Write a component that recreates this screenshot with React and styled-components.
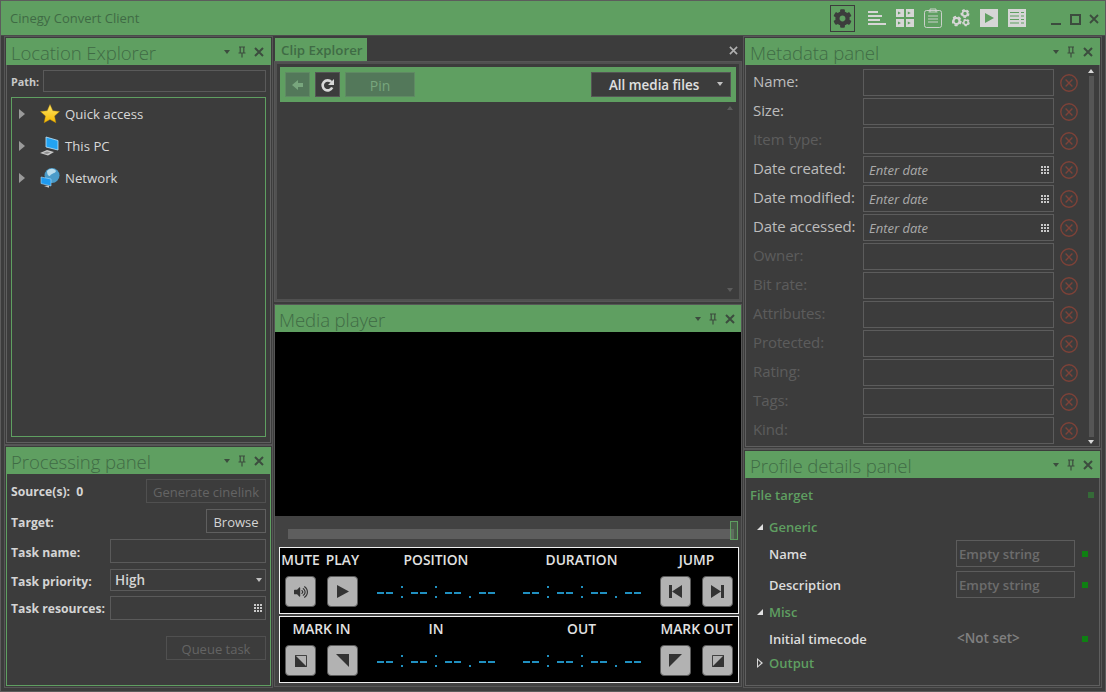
import React from 'react';
import styled, { createGlobalStyle } from 'styled-components';
import { FaCog, FaVolumeUp } from 'react-icons/fa';

const Global = createGlobalStyle`
  html, body { margin: 0; padding: 0; background: #3c3c3c; overflow: hidden; }
  body { font-family: "Open Sans", "Noto Sans", "Liberation Sans", sans-serif; }
  * { box-sizing: border-box; }
`;

const GREEN = '#5f9f61';
const DARKGREEN = '#3f6b45';
const BLUE = '#2090c0';

const Window = styled.div`
  width: 1106px; height: 692px; display: flex; flex-direction: column;
  background: #3c3c3c; border: 1px solid #5c5c5c; overflow: hidden;
`;
const TitleBar = styled.header`
  height: 35px; flex: none; background: ${GREEN}; display: flex; align-items: center;
  padding: 0 7px 0 9px; border-bottom: 1px solid #4b4b4b; margin: 0 -1px 0 0;
`;
const AppTitle = styled.div`
  font-size: 13px; color: ${DARKGREEN}; flex: 1;
`;
const GearBox = styled.div`
  width: 25px; height: 27px; border: 1px solid #3c3c3c; display: flex; align-items: center; justify-content: center;
  color: #3c3c3c; font-size: 19px; margin-right: 13px;
`;
const ToolIcon = styled.div`
  width: 18px; height: 20px; margin-right: ${p => p.$gap ?? 10}px; color: #d6d6d6; display: flex; align-items: center; justify-content: center;
  svg { display: block; }
`;
const WinControls = styled.div`
  display: flex; align-items: center; gap: 8px; margin-left: 25px; color: #3c4c3e; padding-top: 2px;
`;
const Columns = styled.main`
  flex: 1; display: grid; grid-template-columns: 265px 466px 355px; column-gap: 4px;
  padding: 2px 5px 5px 5px; min-height: 0;
`;
const Column = styled.div`
  display: flex; flex-direction: column; gap: 4px; min-height: 0;
`;
const Panel = styled.section`
  display: flex; flex-direction: column; height: ${p => p.$h}px; flex: none;
  outline: 1px solid #565656; outline-offset: 1px;
  border: 1px solid ${p => p.$border ?? '#5f5f5f'}; border-top: 0; background: #3c3c3c;
`;
const PanelHead = styled.div`
  height: 27px; flex: none; background: ${GREEN}; display: flex; align-items: center; margin: 0 -1px;
  padding: 0 7px 0 5px;
`;
const PanelTitle = styled.h2`
  margin: 0; flex: 1; font-size: 18.6px; font-weight: 300; color: ${DARKGREEN}; letter-spacing: -0.1px; white-space: nowrap; padding-top: 1px;
`;
const HeadControls = styled.div`
  display: flex; align-items: center; gap: 8px; color: #3c4c3e; flex: none;
  svg { display: block; }
`;
/* Location */
const PathRow = styled.div`
  display: flex; align-items: center; padding: 5px 4px 0 4px; gap: 4px;
`;
const TinyLabel = styled.label`
  font-size: 10.8px; font-weight: 700; color: #c8c8c8;
`;
const TextBox = styled.div`
  flex: ${p => p.$w ? 'none' : 1}; width: ${p => p.$w ? p.$w + 'px' : 'auto'}; height: ${p => p.$h ?? 24}px; border: 1px solid #5a5a5a;
  display: flex; align-items: center; padding: 0 3px 0 5px;
`;
const Tree = styled.div`
  margin: 5px 4px 5px 4px; flex: 1; border: 1px solid ${GREEN};
`;
const TreeRow = styled.div`
  height: 32px; display: flex; align-items: center; font-size: 13.2px; color: #d8d8d8; padding-left: 7px;
`;
const Caret = styled.span`
  width: 0; height: 0; border-top: 5px solid transparent; border-bottom: 5px solid transparent; border-left: 6px solid #9a9a9a; margin-right: 14px;
`;
const TreeIcon = styled.div`
  width: 22px; height: 22px; margin-right: 4px; flex: none; svg { display: block; }
`;
/* Processing */
const ProcBody = styled.div`
  flex: 1; display: flex; flex-direction: column; padding: 5px 4px 0 4px;
`;
const ProcRow = styled.div`
  display: flex; align-items: center; justify-content: space-between; height: ${p => p.$h ?? 24}px; margin-bottom: ${p => p.$mb ?? 6}px;
`;
const BoldLabel = styled.span`
  font-size: 12.2px; font-weight: 700; color: #d4d4d4; white-space: nowrap; position: relative; top: ${p => p.$t ?? 1}px; word-spacing: ${p => p.$ws ?? 0}px;
`;
const FlatButton = styled.div`
  width: ${p => p.$w}px; height: 24px; border: 1px solid ${p => p.$disabled ? '#505050' : '#5f5f5f'};
  font-size: 13px; color: ${p => p.$disabled ? '#646464' : '#d4d4d4'}; display: flex; align-items: center; justify-content: center;
  margin-left: auto; white-space: nowrap; padding-top: 1px;
`;
const SelectValue = styled.span`
  font-size: 13.5px; font-weight: 600; color: #d4d4d4; flex: 1; margin-left: -1px;
`;
const DownTri = styled.span`
  width: 0; height: 0; border-left: 3.5px solid transparent; border-right: 3.5px solid transparent; border-top: 4px solid ${p => p.$c ?? '#c0c0c0'}; flex: none; margin-bottom: ${p => p.$up ?? 0}px;
`;
const Dots = styled.div`
  display: grid; grid-template-columns: repeat(3, 2px); grid-auto-rows: 2px; gap: 1px; flex: none; margin-left: auto;
  i { background: #c8c8c8; display: block; }
`;
const DotGrid = () => <Dots>{Array.from({ length: 9 }).map((_, i) => <i key={i} />)}</Dots>;

/* Clip */
const ClipStack = styled.div`
  flex: none;
`;
const TabStrip = styled.div`
  height: 24px; flex: none; display: flex; align-items: stretch; justify-content: space-between; background: #3c3c3c;
`;
const Tab = styled.div`
  width: 92px; background: ${GREEN}; color: ${DARKGREEN}; font-size: 13.3px; font-weight: 600; display: flex; align-items: center; padding-left: 6px;
`;
const TabClose = styled.div`
  padding: 8px 3px 0 0; color: #b0b0b0; svg { display: block; }
`;
const ClipOuter = styled.section`
  height: 239px; flex: none; border: 2px solid #505050; padding: 3px;
  display: flex; flex-direction: column; outline: 1px solid #565656;
`;
const ClipToolbar = styled.div`
  height: 35px; flex: none; background: ${GREEN}; display: flex; align-items: center; padding: 0 5px 0 5px; gap: 5px;
`;
const SquareBtn = styled.div`
  width: ${p => p.$w ?? 25}px; height: 25px; background: ${p => p.$dim ? '#53785a' : '#3c3c3c'}; border: 1px solid ${p => p.$dim ? '#5f8a63' : '#555'};
  display: flex; align-items: center; justify-content: center; color: ${p => p.$dim ? '#78a67d' : '#d8d8d8'}; font-size: 14px; padding-top: 1px;
  svg { display: block; }
`;
const MediaSelect = styled.div`
  margin-left: auto; width: 140px; height: 25px; background: #3c3c3c; border: 1px solid #555; display: flex; align-items: center;
  font-size: 13.4px; font-weight: 600; color: #e0e0e0; padding: 1px 7px 0 17px;
  span:first-child { flex: 1; }
`;
const ClipList = styled.div`
  flex: 1; display: flex; flex-direction: column; justify-content: space-between; align-items: flex-end; padding: 4px 3px 4px 0;
`;
const UpTri = styled.span`
  width: 0; height: 0; flex: none; border-left: 3.5px solid transparent; border-right: 3.5px solid transparent; border-bottom: 4px solid ${p => p.$c ?? '#5c5c5c'};
`;
const ScrollDown = styled.span`
  width: 0; height: 0; flex: none; border-left: 3.5px solid transparent; border-right: 3.5px solid transparent; border-top: 4px solid ${p => p.$c ?? '#5c5c5c'};
`;
/* Media */
const MediaPanel = styled.section`
  flex: 1; display: flex; flex-direction: column; background: #424242; outline: 1px solid #565656;
`;
const Video = styled.div`
  height: 184px; flex: none; background: #000;
`;
const SliderArea = styled.div`
  height: 31px; flex: none; display: flex; align-items: center; padding: 5px 7px 0 13px;
`;
const Track = styled.div`
  flex: 1; height: 10px; background: #5e5e5e; position: relative;
`;
const Thumb = styled.div`
  position: absolute; right: -4px; top: -8px; width: 8px; height: 19px; border: 1px solid ${GREEN}; background: rgba(95,159,97,.25);
`;
const Transport = styled.div`
  width: 460px; margin: 0 0 2px 4px; height: 67px; flex: none; border: 1px solid #f0f0f0; background: #000;
  display: grid; grid-template-columns: 31px 31px 134px 135px 31px 31px; column-gap: 11px; grid-template-rows: 24px 31px;
  row-gap: 4px; padding: 0 0 0 5px;
`;
const Cap = styled.div`
  grid-column: ${p => p.$col}; font-size: 13.8px; font-weight: 600; align-self: center; white-space: nowrap; justify-self: center; line-height: 18px; color: #e2e2e2;
`;
const TBtn = styled.div`
  width: 31px; height: 31px; background: #b2b2b2; border: 1px solid #5a5a5a; border-radius: 4px; display: flex; align-items: center; justify-content: center; color: #333;
  svg { display: block; }
`;
const TC = styled.div`
  display: flex; justify-content: center; align-items: center; gap: 8px; padding-top: 1px;
`;
const Dash = styled.i`
  display: block; width: 16px; height: 2px; background: linear-gradient(90deg, ${BLUE} 0 7px, transparent 7px 9px, ${BLUE} 9px 16px);
  position: relative; top: 1px;
`;
const Sep = styled.i`
  display: block; width: 2px; height: 12px;
  background: ${p => p.$dot
    ? `linear-gradient(transparent 0 10px, ${BLUE} 10px 12px)`
    : `linear-gradient(${BLUE} 0 2px, transparent 2px 10px, ${BLUE} 10px 12px)`};
`;
const Timecode = () => (
  <TC><Dash /><Sep /><Dash /><Sep /><Dash /><Sep $dot /><Dash /></TC>
);
/* Metadata */
const MetaBody = styled.div`
  flex: 1; display: grid; grid-template-columns: 1fr 13px; min-height: 0; padding: 4px 0 0 0;
`;
const MetaRows = styled.div`
  display: flex; flex-direction: column; gap: 2px;
`;
const MetaRow = styled.div`
  height: 27px; display: flex; align-items: center; padding-left: 7px;
`;
const MetaLabel = styled.label`
  width: 110px; flex: none; font-size: 15px; color: ${p => p.$off ? '#5c5c5c' : '#bcbcbc'}; white-space: nowrap; position: relative; top: -2px; letter-spacing: -0.1px;
`;
const MetaInput = styled.div`
  width: 191px; flex: none; height: 27px; border: 1px solid #5c5c5c; display: flex; align-items: center; padding: 1px 4px 0 5px;
  font-size: 13px; font-style: italic; color: #aaa;
`;
const ClearIcon = styled.div`
  margin-left: 6px; svg { display: block; }
`;
const ScrollCol = styled.div`
  display: flex; flex-direction: column; align-items: center; justify-content: space-between; padding: 0 3px 2px 0; height: 100%; gap: 3px;
`;
const ScrollThumb = styled.div`
  width: 5px; flex: 1; background: #555;
`;
/* Profile */
const ProfileBody = styled.div`
  flex: 1; padding: 7px 0 0 4px; display: flex; flex-direction: column;
`;
const TopRow = styled.div`
  display: flex; align-items: center; justify-content: space-between; height: 20px; margin-bottom: 12px; padding-right: 5px;
`;
const GreenHead = styled.div`
  font-size: 13px; font-weight: 600; color: ${GREEN};
`;
const Square = styled.span`
  width: 6px; height: 6px; flex: none; background: ${p => p.$dim ? '#356a38' : '#0e8012'};
`;
const GroupRow = styled.div`
  display: flex; align-items: center; height: ${p => p.$h}px; padding-left: 5px; gap: 5px; margin-bottom: ${p => p.$mb ?? 0}px;
`;
const Expander = styled.span`
  width: 9px; display: flex; justify-content: center;
`;
const OpenTri = styled.span`
  width: 0; height: 0; border-left: 6px solid transparent; border-bottom: 6px solid #e0e0e0;
`;
const ClosedTri = styled.span`
  width: 0; height: 0; border-top: 5px solid transparent; border-bottom: 5px solid transparent; border-left: 6px solid #d8d8d8; position: relative;
  &::after { content: ''; position: absolute; left: -5px; top: -3px; border-top: 3px solid transparent; border-bottom: 3px solid transparent; border-left: 3.5px solid #3c3c3c; }
`;
const PropRow = styled.div`
  display: flex; align-items: center; height: ${p => p.$h ?? 31}px; padding-left: 19px; margin-top: ${p => p.$mt ?? 0}px;
`;
const PropLabel = styled.div`
  width: 187px; flex: none; font-size: 13px; font-weight: 600; color: #dcdcdc;
`;
const PropInput = styled.div`
  width: 119px; height: 27px; flex: none; border: 1px solid #5c5c5c; font-size: 13.2px; font-weight: 600; color: #6c6c6c; display: flex; align-items: center; padding: 1px 0 0 2px; margin-right: 7px;
`;
const PropValue = styled.div`
  width: 119px; flex: none; font-size: 13.5px; font-weight: 600; color: #808080; padding-left: 1px; margin-right: 7px; position: relative; top: -1px;
`;

const Pin = () => (
  <svg width="8" height="12" viewBox="0 0 8 12" fill="none" stroke="currentColor" strokeWidth="1.2">
    <path d="M2.2 1v5.5M5.8 1v5.5M1 1h6M.5 7h7M4 7v4.5" />
  </svg>
);
const CloseX = ({ s = 10, w = 2 }) => (
  <svg width={s} height={s} viewBox="0 0 10 10" stroke="currentColor" strokeWidth={w} fill="none"><path d="M1 1l8 8M9 1l-8 8" /></svg>
);
const Controls = () => (
  <HeadControls><DownTri $c="#3c4c3e" /><Pin /><CloseX /></HeadControls>
);
const Star = () => (
  <svg width="22" height="22" viewBox="0 0 22 22">
    <defs><linearGradient id="st" x1="0" y1="0" x2="0" y2="1"><stop offset="0" stopColor="#ffe86a" /><stop offset="1" stopColor="#f5b800" /></linearGradient></defs>
    <path d="M11 1.5l2.8 6.3 6.7.7-5 4.6 1.4 6.7L11 16.4l-5.9 3.4 1.4-6.7-5-4.6 6.700-.7z" fill="url(#st)" stroke="#c08a00" strokeWidth=".4" />
  </svg>
);
const PC = () => (
  <svg width="22" height="22" viewBox="0 0 22 22">
    <path d="M7 2l12 3.5v9.500L7 12z" fill="#22a3f2" stroke="#bfe4fb" strokeWidth=".8" />
    <path d="M1 18l7-3 7 2-6 3.5z" fill="#c9c9c9" />
    <path d="M4 18l4-1.6 3.5 1-3.5 1.6z" fill="#8d8d8d" />
  </svg>
);
const Net = () => (
  <svg width="22" height="22" viewBox="0 0 22 22">
    <circle cx="13" cy="8.5" r="7.5" fill="#4a9bc9" />
    <path d="M8 4c3-3 7-3 9 0-1 3-5 2-6 5-2 0-3-2-3-5z" fill="#b8dced" />
    <path d="M2 10l10 2v7L2 16.5z" fill="#1f9af0" stroke="#a8dcfa" strokeWidth=".6" />
    <path d="M5 19l5-.5 0 2.2z" fill="#c9c9c9" />
  </svg>
);
const Clear = () => (
  <svg width="18" height="18" viewBox="0 0 18 18" fill="none" stroke="#7e4238" strokeWidth="1.4">
    <circle cx="9" cy="9" r="8.2" /><path d="M5.6 5.6l6.8 6.8M12.4 5.6l-6.8 6.8" />
  </svg>
);
const Refresh = () => (
  <svg width="15" height="15" viewBox="0 0 15 15" fill="none">
    <path d="M12.2 9.5A5 5 0 1 1 11.4 4" stroke="currentColor" strokeWidth="2.6" />
    <path d="M14 1v6H8z" fill="currentColor" />
  </svg>
);
const Back = () => (
  <svg width="12" height="10" viewBox="0 0 12 10" fill="currentColor"><path d="M0 5l6-5v3h5v4H6v3z" /></svg>
);

const IconLines = () => (
  <svg width="18" height="14" viewBox="0 0 18 14" fill="currentColor"><path d="M0 0h10v2H0zM0 4h14v2H0zM0 8h12v2H0zM0 12h18v2H0z" /></svg>
);
const IconGrid = () => (
  <svg width="18" height="18" viewBox="0 0 18 18"><g fill="currentColor"><rect width="8" height="8" /><rect x="10" width="8" height="8" /><rect y="10" width="8" height="8" /><rect x="10" y="10" width="8" height="8" /></g>
    <g fill={GREEN}><path d="M2 2.5l3 1.5-3 1.5zM11.8 2.5l3 1.5-3 1.5zM2 12.5l3 1.5-3 1.5zM11.8 12.5l3 1.5-3 1.5z" /></g></svg>
);
const IconClip = () => (
  <svg width="18" height="20" viewBox="0 0 18 20" fill="none" stroke="currentColor" strokeWidth=".9"><rect x=".5" y="2.5" width="17" height="17" rx="2" /><path d="M6 4V1h6v3M4.500 4h9M4 8h10M4 11h10M4 14h10" /></svg>
);
const GearOutline = ({ cx, cy, r }) => (
  <g fill="none" stroke="currentColor">
    <circle cx={cx} cy={cy} r={r} strokeWidth={r * 0.7} />
    <circle cx={cx} cy={cy} r={r * 1.45} strokeWidth={r * 0.55} strokeDasharray={`${r * 1.05} ${r * 0.77}`} />
  </g>
);
const IconGears = () => (
  <svg width="18" height="18" viewBox="0 0 18 18">
    <GearOutline cx={4.5} cy={12} r={3} /><GearOutline cx={13} cy={4.5} r={2.6} /><GearOutline cx={14} cy={13.5} r={2.2} />
  </svg>
);
const IconPlay = () => (
  <svg width="18" height="18" viewBox="0 0 18 18"><rect width="18" height="18" fill="currentColor" /><path d="M5 4l9 5-9 5z" fill={GREEN} /></svg>
);
const IconList = () => (
  <svg width="18" height="18" viewBox="0 0 18 18"><rect width="18" height="18" fill="currentColor" /><path d="M2 3.5h9M13 3.5h3M2 7h9M13 7h3M2 10.5h9M13 10.5h3M2 14h9M13 14h3" stroke={GREEN} strokeWidth="1" /></svg>
);
const TPlay = () => <svg width="13" height="13" viewBox="0 0 13 13" fill="currentColor"><path d="M1 0l12 6.5L1 13z" /></svg>;
const TPrev = () => <svg width="13" height="13" viewBox="0 0 13 13" fill="currentColor"><path d="M0 0h3v13H0zM13 0v13L3 6.5z" /></svg>;
const TNext = () => <svg width="13" height="13" viewBox="0 0 13 13" fill="currentColor"><path d="M13 0h-3v13h3zM0 0v13l10-6.5z" /></svg>;
const MIn1 = () => <svg width="12" height="12" viewBox="0 0 13 13"><path d="M.5.5h12v12H.5z" fill="none" stroke="currentColor" /><path d="M0 0l13 13H0z" fill="currentColor" /></svg>;
const MIn2 = () => <svg width="13" height="13" viewBox="0 0 13 13" fill="currentColor"><path d="M0 0h13v13z" /></svg>;
const MOut1 = () => <svg width="13" height="13" viewBox="0 0 13 13" fill="currentColor"><path d="M0 0h13L0 13z" /></svg>;
const MOut2 = () => <svg width="12" height="12" viewBox="0 0 13 13"><path d="M.5.5h12v12H.5z" fill="none" stroke="currentColor" /><path d="M13 0v13H0z" fill="currentColor" /></svg>;

const metaRows = [
  ['Name:', 0, 0], ['Size:', 0, 0], ['Item type:', 1, 0], ['Date created:', 0, 1], ['Date modified:', 0, 1], ['Date accessed:', 0, 1],
  ['Owner:', 1, 0], ['Bit rate:', 1, 0], ['Attributes:', 1, 0], ['Protected:', 1, 0], ['Rating:', 1, 0], ['Tags:', 1, 0], ['Kind:', 1, 0],
];

export default function App() {
  return (
    <>
      <Global />
      <Window>
        <TitleBar>
          <AppTitle>Cinegy Convert Client</AppTitle>
          <GearBox><FaCog /></GearBox>
          <ToolIcon><IconLines /></ToolIcon>
          <ToolIcon><IconGrid /></ToolIcon>
          <ToolIcon><IconClip /></ToolIcon>
          <ToolIcon><IconGears /></ToolIcon>
          <ToolIcon><IconPlay /></ToolIcon>
          <ToolIcon $gap={0}><IconList /></ToolIcon>
          <WinControls>
            <svg width="11" height="11" viewBox="0 0 11 11" fill="currentColor"><path d="M0 9h10v2H0z" /></svg>
            <svg width="11" height="11" viewBox="0 0 11 11" fill="none" stroke="currentColor" strokeWidth="2"><rect x="1" y="1" width="9" height="9" /></svg>
            <CloseX s={10} w={1.8} />
          </WinControls>
        </TitleBar>
        <Columns>
          <Column>
            <Panel $h={405}>
              <PanelHead><PanelTitle>Location Explorer</PanelTitle><Controls /></PanelHead>
              <PathRow><TinyLabel>Path:</TinyLabel><TextBox $h={22} /></PathRow>
              <Tree>
                <TreeRow><Caret /><TreeIcon><Star /></TreeIcon>Quick access</TreeRow>
                <TreeRow><Caret /><TreeIcon><PC /></TreeIcon>This PC</TreeRow>
                <TreeRow><Caret /><TreeIcon><Net /></TreeIcon>Network</TreeRow>
              </Tree>
            </Panel>
            <Panel $h={239} $border={GREEN}>
              <PanelHead><PanelTitle>Processing panel</PanelTitle><Controls /></PanelHead>
              <ProcBody>
                <ProcRow><BoldLabel $t={0} $ws={3}>Source(s): 0</BoldLabel><FlatButton $w={120} $disabled>Generate cinelink</FlatButton></ProcRow>
                <ProcRow><BoldLabel>Target:</BoldLabel><FlatButton $w={60}>Browse</FlatButton></ProcRow>
                <ProcRow><BoldLabel>Task name:</BoldLabel><TextBox $w={156} /></ProcRow>
                <ProcRow $h={22} $mb={5}><BoldLabel>Task priority:</BoldLabel><TextBox $w={156} $h={22}><SelectValue>High</SelectValue><DownTri /></TextBox></ProcRow>
                <ProcRow $mb={16}><BoldLabel $t={0}>Task resources:</BoldLabel><TextBox $w={156}><DotGrid /></TextBox></ProcRow>
                <ProcRow><FlatButton $w={100} $disabled>Queue task</FlatButton></ProcRow>
              </ProcBody>
            </Panel>
          </Column>
          <Column>
            <ClipStack>
              <TabStrip><Tab>Clip Explorer</Tab><TabClose><CloseX s={9} w={1.8} /></TabClose></TabStrip>
              <ClipOuter>
                <ClipToolbar>
                  <SquareBtn $dim><Back /></SquareBtn>
                  <SquareBtn><Refresh /></SquareBtn>
                  <SquareBtn $dim $w={70}>Pin</SquareBtn>
                  <MediaSelect><span>All media files</span><DownTri $up={3} /></MediaSelect>
                </ClipToolbar>
                <ClipList><UpTri /><ScrollDown /></ClipList>
              </ClipOuter>
            </ClipStack>
            <MediaPanel>
              <PanelHead><PanelTitle>Media player</PanelTitle><Controls /></PanelHead>
              <Video />
              <SliderArea><Track><Thumb /></Track></SliderArea>
              <Transport>
                <Cap $col="1">MUTE</Cap><Cap $col="2">PLAY</Cap><Cap $col="3">POSITION</Cap><Cap $col="4">DURATION</Cap><Cap $col="5 / span 2">JUMP</Cap>
                <TBtn><FaVolumeUp size={14} /></TBtn><TBtn><TPlay /></TBtn><Timecode /><Timecode /><TBtn><TPrev /></TBtn><TBtn><TNext /></TBtn>
              </Transport>
              <Transport>
                <Cap $col="1 / span 2">MARK IN</Cap><Cap $col="3">IN</Cap><Cap $col="4">OUT</Cap><Cap $col="5 / span 2">MARK OUT</Cap>
                <TBtn><MIn1 /></TBtn><TBtn><MIn2 /></TBtn><Timecode /><Timecode /><TBtn><MOut1 /></TBtn><TBtn><MOut2 /></TBtn>
              </Transport>
            </MediaPanel>
          </Column>
          <Column>
            <Panel $h={409}>
              <PanelHead><PanelTitle>Metadata panel</PanelTitle><Controls /></PanelHead>
              <MetaBody>
                <MetaRows>
                  {metaRows.map(([label, off, date]) => (
                    <MetaRow key={label}>
                      <MetaLabel $off={!!off}>{label}</MetaLabel>
                      <MetaInput>{date ? <><span>Enter date</span><DotGrid /></> : null}</MetaInput>
                      <ClearIcon><Clear /></ClearIcon>
                    </MetaRow>
                  ))}
                </MetaRows>
                <ScrollCol><UpTri $c="#d8d8d8" /><ScrollThumb /><ScrollDown $c="#d8d8d8" /></ScrollCol>
              </MetaBody>
            </Panel>
            <Panel $h={235}>
              <PanelHead><PanelTitle>Profile details panel</PanelTitle><Controls /></PanelHead>
              <ProfileBody>
                <TopRow><GreenHead>File target</GreenHead><Square $dim /></TopRow>
                <GroupRow $h={20} $mb={1}><Expander><OpenTri /></Expander><GreenHead>Generic</GreenHead></GroupRow>
                <PropRow><PropLabel>Name</PropLabel><PropInput>Empty string</PropInput><Square /></PropRow>
                <PropRow><PropLabel>Description</PropLabel><PropInput>Empty string</PropInput><Square /></PropRow>
                <GroupRow $h={24}><Expander><OpenTri /></Expander><GreenHead>Misc</GreenHead></GroupRow>
                <PropRow $h={28} $mt={1}><PropLabel>Initial timecode</PropLabel><PropValue>&lt;Not set&gt;</PropValue><Square /></PropRow>
                <GroupRow $h={20}><Expander><ClosedTri /></Expander><GreenHead>Output</GreenHead></GroupRow>
              </ProfileBody>
            </Panel>
          </Column>
        </Columns>
      </Window>
    </>
  );
}
